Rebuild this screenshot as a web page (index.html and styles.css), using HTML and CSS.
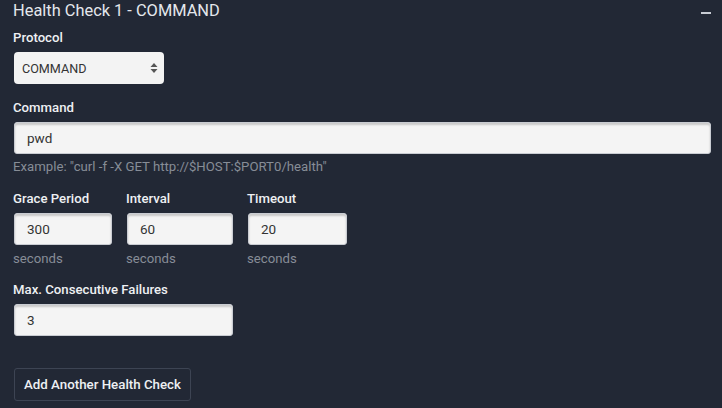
FILE: index.html
```html
<!DOCTYPE html>
<html>
<head>
<meta charset="utf-8">
<link rel="stylesheet" href="styles.css">
</head>
<body>
<div class="panel">
  <div class="header">
    <h2 class="title">Health Check 1 - COMMAND</h2>
    <span class="collapse"></span>
  </div>
  <div class="field first">
    <label class="label">Protocol</label>
    <div class="select">
      <span>COMMAND</span>
      <svg class="arrows" width="8" height="12" viewBox="0 0 8 12"><path d="M4 1 L7.5 5 H0.5 Z" fill="#555"/><path d="M4 11 L7.5 7 H0.5 Z" fill="#555"/></svg>
    </div>
  </div>
  <div class="field">
    <label class="label">Command</label>
    <div class="input wide">pwd</div>
    <div class="help">Example: "curl -f -X GET http://$HOST:$PORT0/health"</div>
  </div>
  <div class="row">
    <div class="col c1">
      <label class="label">Grace Period</label>
      <div class="input">300</div>
      <div class="help">seconds</div>
    </div>
    <div class="col c2">
      <label class="label">Interval</label>
      <div class="input">60</div>
      <div class="help">seconds</div>
    </div>
    <div class="col c3">
      <label class="label">Timeout</label>
      <div class="input">20</div>
      <div class="help">seconds</div>
    </div>
  </div>
  <div class="field">
    <label class="label">Max. Consecutive Failures</label>
    <div class="input mid">3</div>
  </div>
  <button class="btn">Add Another Health Check</button>
</div>
</body>
</html>
```
FILE: styles.css
```css
html, body {
  margin: 0;
  padding: 0;
  background: #222835;
}
body {
  font-family: Roboto, Lato, sans-serif;
  color: #e6e9ee;
  width: 722px;
  height: 408px;
  overflow: hidden;
}
.panel {
  padding: 0 11px 0 14px;
}
.header {
  display: flex;
  justify-content: space-between;
  align-items: center;
  height: 22px;
}
.title {
  margin: 0 0 0 -1px;
  font-size: 16.4px;
  line-height: 22px;
  font-weight: 400;
  color: #e4e7ec;
}
.collapse {
  display: block;
  width: 10px;
  height: 2px;
  background: #c8ccd4;
  margin-top: 3px;
}
.label {
  display: block;
  font-size: 13.2px;
  font-weight: 500;
  color: #eef0f3;
  line-height: 18px;
  margin: 0 0 5px -1px;
}
.first .label {
  margin-top: 7px;
}
.select {
  width: 150px;
  height: 32px;
  box-sizing: border-box;
  background: #f3f3f3;
  border-radius: 4px;
  display: flex;
  align-items: center;
  justify-content: space-between;
  padding: 0 6px 0 8px;
  font-size: 12.6px;
  color: #333;
  margin-bottom: 15px;
}
.input {
  height: 32px;
  box-sizing: border-box;
  background: #f4f4f4;
  border-radius: 3px;
  box-shadow: inset 0 2px 2px rgba(0,0,0,0.18);
  border: 1px solid #c9ccd2;
  display: flex;
  align-items: center;
  padding: 0 12px;
  font-size: 13.5px;
  color: #333;
}
.input.wide { width: 697px; }
.input.mid { width: 219px; }
.help {
  font-size: 13.2px;
  color: #878d97;
  line-height: 18px;
  margin: 4px 0 14px -1px;
}
.row {
  display: flex;
  gap: 15px;
}
.c1 { width: 98px; }
.c2 { width: 106px; }
.c3 { width: 99px; }
.col .help { margin: 5px 0 13px -1px; }
.btn {
  margin-top: 32px;
  height: 33px;
  width: 177px;
  padding: 0;
  background: transparent;
  border: 1px solid #3d4453;
  border-radius: 3px;
  color: #eef0f3;
  font-family: inherit;
  font-size: 13.3px;
  font-weight: 500;
}
```
